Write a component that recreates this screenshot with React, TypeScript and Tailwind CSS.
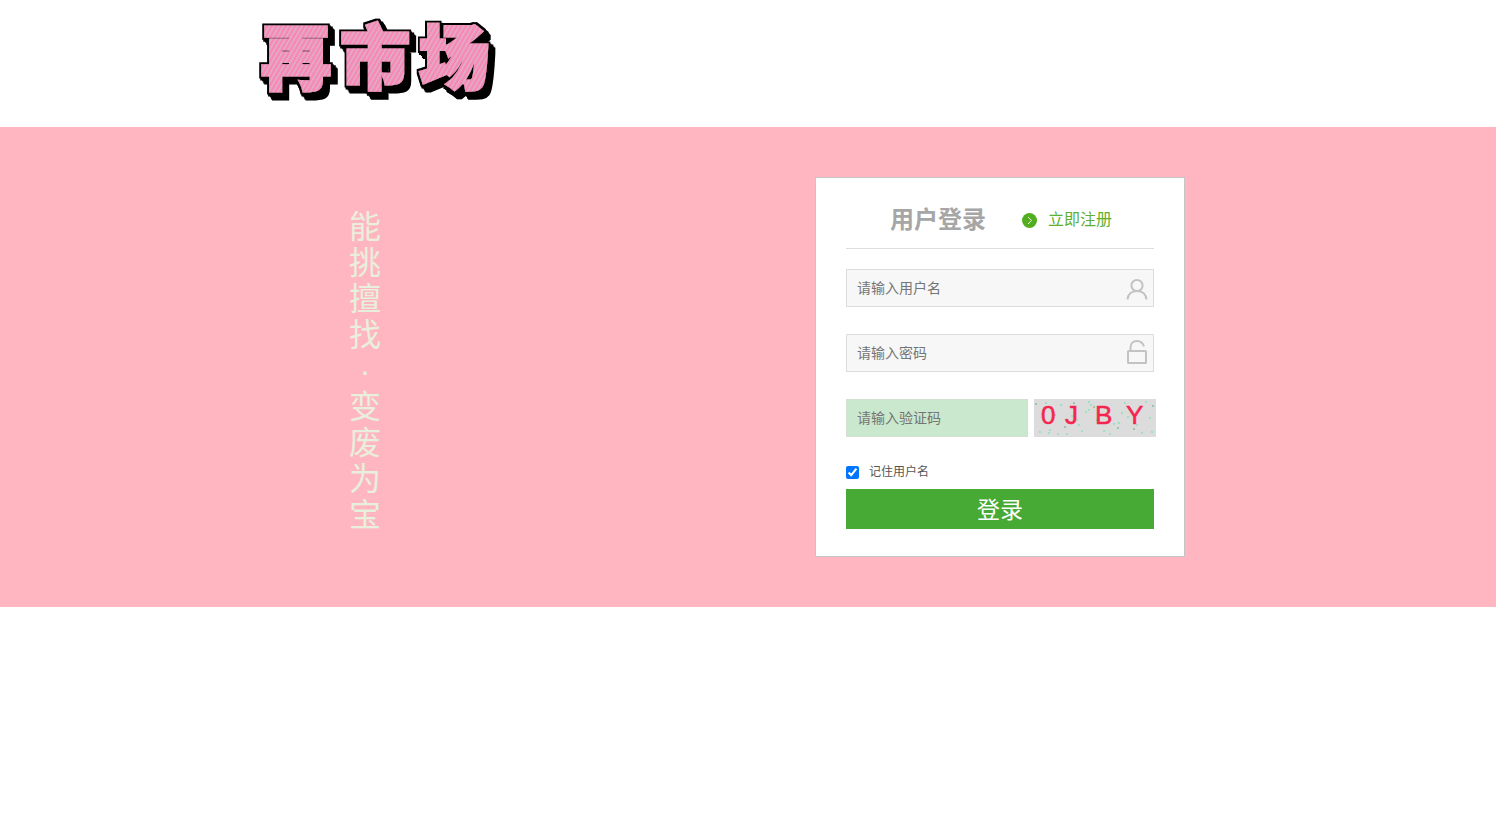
import { useState } from "react";

const SLOGAN = ["能", "挑", "擅", "找", "·", "变", "废", "为", "宝"];

const LOGO_CHARS = [
  { char: "再", x: 5, y: 68 },
  { char: "市", x: 84, y: 68 },
  { char: "场", x: 163, y: 68 },
];

const CAPTCHA_CHARS = [
  { char: "0", x: 7 },
  { char: "J", x: 31 },
  { char: "B", x: 61 },
  { char: "Y", x: 92 },
];

const CAPTCHA_DOTS = [
  [2, 5], [6, 33], [15, 34], [16, 31], [24, 35], [31, 28], [33, 35], [38, 17],
  [43, 21], [45, 26], [40, 4], [52, 13], [55, 3], [57, 6], [55, 11], [60, 8],
  [63, 21], [70, 32], [76, 35], [80, 25], [84, 29], [85, 24], [88, 14],
  [94, 18], [91, 4], [100, 30], [103, 26], [112, 3], [116, 19], [118, 33],
  [119, 7], [108, 34], [12, 4], [27, 6], [48, 32], [21, 16],
];

function Logo() {
  return (
    <svg
      width="250"
      height="91"
      viewBox="0 0 250 91"
      role="img"
      aria-label="再市场"
      className="overflow-visible font-['Noto_Sans_CJK_SC',sans-serif] text-[70px] font-black"
    >
      <defs>
        <pattern id="stripes" width="4" height="4" patternUnits="userSpaceOnUse" patternTransform="rotate(30)">
          <rect width="4" height="4" fill="#fa86b4" />
          <rect width="1.6" height="4" fill="#dcb0c8" />
        </pattern>
        {/* black outline plus a solid block shadow to the lower right */}
        <filter id="block" x="-10%" y="-20%" width="120%" height="140%">
          <feMorphology in="SourceAlpha" operator="dilate" radius="2" result="outline" />
          <feOffset in="outline" dx="1" dy="2" result="s1" />
          <feOffset in="outline" dx="3" dy="3" result="s2" />
          <feOffset in="outline" dx="4" dy="5" result="s3" />
          <feOffset in="outline" dx="5" dy="6" result="s4" />
          <feMerge>
            <feMergeNode in="s4" />
            <feMergeNode in="s3" />
            <feMergeNode in="s2" />
            <feMergeNode in="s1" />
            <feMergeNode in="outline" />
            <feMergeNode in="SourceGraphic" />
          </feMerge>
        </filter>
      </defs>
      <g fill="url(#stripes)" stroke="url(#stripes)" strokeWidth="3" strokeLinejoin="miter" filter="url(#block)">
        {LOGO_CHARS.map(({ char, x, y }) => (
          <text key={char} x={x} y={y}>
            {char}
          </text>
        ))}
      </g>
    </svg>
  );
}

function Captcha() {
  return (
    <svg width="122" height="38" viewBox="0 0 122 38" role="img" aria-label="验证码" className="shrink-0 bg-[#dcdcdc]">
      {CAPTCHA_DOTS.map(([x, y], i) => (
        <circle key={i} cx={x} cy={y} r="0.9" fill={i % 5 === 0 ? "#7fb98f" : "#7fe3b4"} />
      ))}
      <g className="font-['Liberation_Sans',sans-serif] text-[26px]" fill="#f5254f" stroke="#f5254f" strokeWidth="0.5">
        {CAPTCHA_CHARS.map(({ char, x }) => (
          <text key={char} x={x} y="25">
            {char}
          </text>
        ))}
      </g>
    </svg>
  );
}

function UserIcon() {
  return (
    <svg width="22" height="26" viewBox="0 0 22 26" fill="none" stroke="#c3c3c3" strokeWidth="2" className="shrink-0">
      <circle cx="11" cy="10.500" r="5.600" />
      <path d="M1.600 24.500c0-5 4-8.600 9.400-8.600s9.400 3.600 9.400 8.600" />
    </svg>
  );
}

function LockIcon() {
  return (
    <svg width="22" height="26" viewBox="0 0 22 26" fill="none" stroke="#c3c3c3" strokeWidth="2" className="shrink-0">
      <rect x="2" y="11" width="18" height="12" rx="0.6" />
      <path d="M4.500 11V7.500c0-4 2.700-6.500 6.500-6.500 3.500 0 5.900 2 7 5.500" />
    </svg>
  );
}

export default function App() {
  const [remember, setRemember] = useState(true);

  return (
    <div className="bg-white font-['Liberation_Sans','Noto_Sans_CJK_SC',sans-serif]">
      <header className="mx-auto max-w-[1000px] px-2 pt-4 pb-5">
        <Logo />
      </header>

      <main className="bg-[#ffb6c1] py-[50px]">
        <div className="mx-auto flex max-w-[1000px] justify-between pr-[63px] pl-[101px]">
          <p className="pt-8 text-center text-[32px] leading-9 text-[#e9efdd]">
            {SLOGAN.map((char) => (
              <span key={char} className="block">
                {char}
              </span>
            ))}
          </p>

          <form
            className="w-[370px] border border-[#c5c5c5] bg-white px-[30px] pb-[27px]"
            onSubmit={(e) => e.preventDefault()}
          >
            <div className="mb-5 flex items-center justify-center gap-9 border-b border-[#ddd] pt-6 pb-2.5 pl-0.5">
              <h1 className="text-2xl leading-9 font-bold text-[#a6a6a6]">用户登录</h1>
              <a href="#register" className="flex items-center gap-[11px] text-base text-[#5eb030]">
                <svg width="15" height="15" viewBox="0 0 15 15">
                  <circle cx="7.500" cy="7.500" r="7.500" fill="#52ae1e" />
                  <path d="M6 4l3.500 3.500L6 11" fill="none" stroke="#e8f5df" strokeWidth="1" />
                </svg>
                立即注册
              </a>
            </div>

            <div className="mb-[27px] flex h-[38px] items-center border border-[#ddd] bg-[#f7f7f7] pr-[5px] pl-2.5">
              <input
                type="text"
                aria-label="用户名"
                placeholder="请输入用户名"
                className="min-w-0 flex-1 bg-transparent text-sm outline-none placeholder:text-[#757575]"
              />
              <UserIcon />
            </div>

            <div className="mb-[27px] flex h-[38px] items-center border border-[#ddd] bg-[#f7f7f7] pr-[5px] pl-2.5">
              <input
                type="password"
                aria-label="密码"
                placeholder="请输入密码"
                className="min-w-0 flex-1 bg-transparent text-sm outline-none placeholder:text-[#757575]"
              />
              <LockIcon />
            </div>

            <div className="mb-[27px] flex gap-1.5">
              <input
                type="text"
                aria-label="验证码"
                placeholder="请输入验证码"
                className="h-[38px] w-[182px] shrink-0 border border-[#d3dfd3] bg-[#c9e8cd] px-2.5 text-sm outline-none placeholder:text-[#757575]"
              />
              <Captcha />
            </div>

            <label className="mb-[9px] flex items-center gap-2.5 text-xs text-[#555]">
              <input
                type="checkbox"
                checked={remember}
                onChange={(e) => setRemember(e.target.checked)}
                className="size-[13px]"
              />
              记住用户名
            </label>

            <button type="submit" className="h-10 w-full cursor-pointer bg-[#47aa34] pt-0.5 text-[23px] text-white">
              登录
            </button>
          </form>
        </div>
      </main>
    </div>
  );
}
